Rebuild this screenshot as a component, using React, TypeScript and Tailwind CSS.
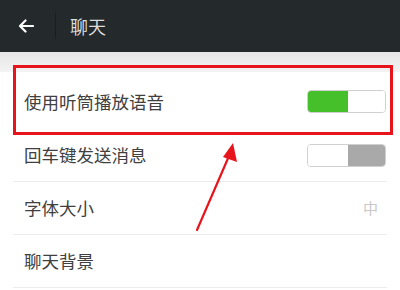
import React from "react";

function Toggle({ on }: { on: boolean }) {
  return (
    <div className="flex h-[23px] w-[79px] overflow-hidden rounded-[4px] border border-[#d0d0d0]">
      {on ? (
        <>
          <div className="h-full w-[40px] bg-[#45bf2a]" />
          <div className="h-full flex-1 bg-white" />
        </>
      ) : (
        <>
          <div className="h-full w-[40px] bg-white" />
          <div className="h-full flex-1 bg-[#a9a9a9]" />
        </>
      )}
    </div>
  );
}

function Row({
  label,
  right,
  h,
  border = true,
  labelPad = "",
}: {
  label: string;
  right?: React.ReactNode;
  h: string;
  border?: boolean;
  labelPad?: string;
}) {
  return (
    <div
      className={`flex items-center justify-between pl-[11px] pr-[1px] ${h} ${
        border ? "border-b border-[#ececec]" : ""
      }`}
    >
      <span className={`text-[17.5px] text-[#404040] ${labelPad}`}>{label}</span>
      {right}
    </div>
  );
}

export default function App() {
  return (
    <div
      className="relative h-[290px] w-[400px] overflow-hidden bg-white"
      style={{ fontFamily: '"Noto Sans CJK SC", "Noto Sans", sans-serif' }}
    >
      <div className="flex h-[52px] items-center bg-[#24292b]">
        <div className="flex w-[55px] items-center justify-center pr-[4px]">
          <svg width="16" height="14" viewBox="0 0 16 14" fill="none">
            <path
              d="M15 7H2M7.5 1.5L2 7l5.5 5.5"
              stroke="#ffffff"
              strokeWidth="2.2"
              strokeLinecap="round"
              strokeLinejoin="round"
            />
          </svg>
        </div>
        <div className="h-[26px] w-px bg-[#1a1e1f]" />
        <span className="ml-[14px] text-[18px] text-[#dcdcdc]">聊天</span>
      </div>
      <div className="h-[20px] bg-gradient-to-b from-[#e6e6e6] to-[#f3f3f3]" />
      <div className="mx-[13px]">
        <Row
          label="使用听筒播放语音"
          h="h-[58px]"
          border={false}
          labelPad="pt-[3px]"
          right={<Toggle on />}
        />
        <Row label="回车键发送消息" h="h-[52px]" right={<Toggle on={false} />} />
        <Row
          label="字体大小"
          h="h-[53px]"
          right={<span className="mr-[8px] text-[15px] text-[#c8c8c8]">中</span>}
        />
        <Row label="聊天背景" h="h-[53px]" />
      </div>

      <div className="absolute left-[13px] top-[65px] h-[70px] w-[380px] border-[3px] border-[#e8141c]" />
      <svg
        className="absolute left-0 top-0"
        width="400"
        height="290"
        viewBox="0 0 400 290"
      >
        <line x1="197" y1="230" x2="229" y2="156" stroke="#e8141c" strokeWidth="2.2" strokeLinecap="round" />
        <polygon points="233,143 237,162 223,157" fill="#e8141c" />
      </svg>
    </div>
  );
}
